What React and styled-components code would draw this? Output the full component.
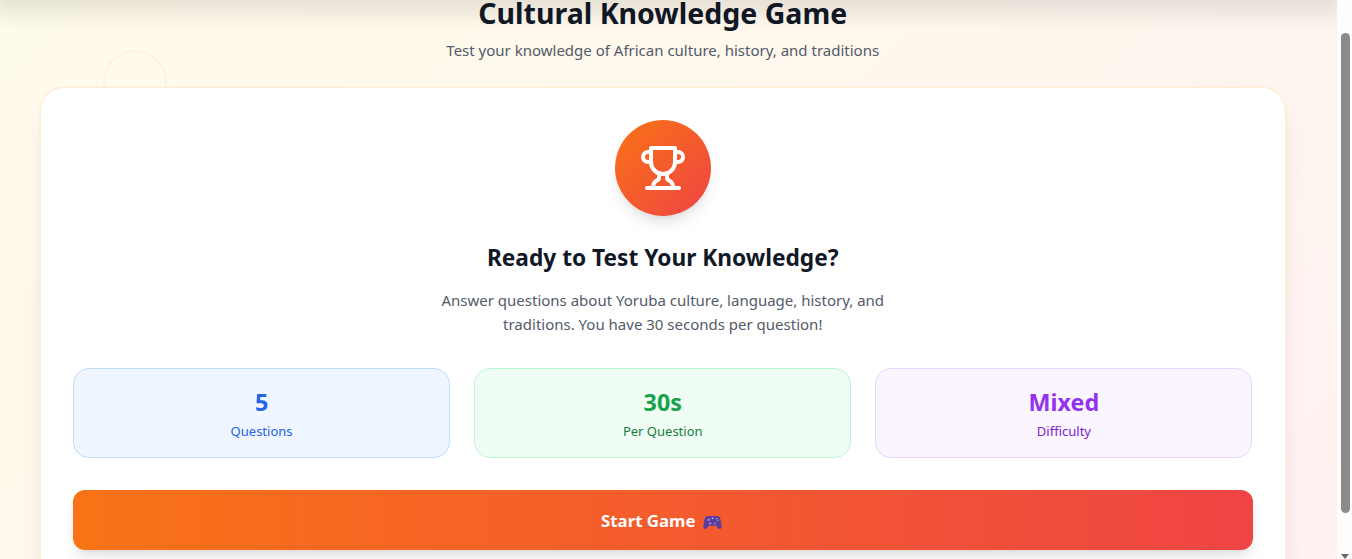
import React from 'react'
import styled, { createGlobalStyle } from 'styled-components'

const GlobalStyle = createGlobalStyle`
    html, body {
        margin: 0;
        height: 100%;
        overflow: hidden;
        font-family: 'Noto Sans', 'Open Sans', sans-serif;
    }
`

const Page = styled.div`
    display: flex;
    height: 559px;
    overflow: hidden;
    background: #fdfdfd;
`

const Main = styled.main`
    position: relative;
    flex: 1;
    overflow: hidden;
    padding: 0 51.5px 0 40px;
    background: linear-gradient(135deg, #fffbeb 0%, #fff7ed 50%, #fef2f2 100%);
    &::before {
        content: '';
        position: absolute;
        top: 0;
        left: 0;
        right: 0;
        height: 0;
        box-shadow: 0 0 24px 10px rgba(0, 0, 0, 0.14);
        z-index: 2;
    }
`

const Ring = styled.div`
    position: absolute;
    top: 50px;
    left: 103px;
    width: 64px;
    height: 64px;
    box-sizing: border-box;
    border: 2px solid rgba(253, 230, 190, 0.3);
    border-radius: 50%;
`

const Header = styled.header`
    position: relative;
    height: 87px;
    text-align: center;
`

const Title = styled.h1`
    margin: 0;
    font-size: 28.5px;
    line-height: 27px;
    font-weight: 700;
    color: #111827;
`

const Subtitle = styled.p`
    margin: 11px 0 0;
    font-size: 15px;
    line-height: 24px;
    color: #525b6a;
`

const Card = styled.section`
    position: relative;
    box-sizing: border-box;
    height: 520px;
    padding: 32px;
    background: #fff;
    border: 1px solid #ffedd5;
    border-radius: 24px;
    box-shadow: 0 0 0 0.5px #ffedd5, 0 20px 25px -5px rgba(0, 0, 0, 0.1), 0 8px 10px -6px rgba(0, 0, 0, 0.1);
    text-align: center;
`

const Badge = styled.div`
    display: flex;
    align-items: center;
    justify-content: center;
    width: 96px;
    height: 96px;
    margin: 0 auto 24px;
    border-radius: 50%;
    background: linear-gradient(135deg, #f97316, #ef4444);
    color: #fff;
    box-shadow: 0 10px 15px -3px rgba(0, 0, 0, 0.1), 0 4px 6px -4px rgba(0, 0, 0, 0.1);
`

const Heading = styled.h2`
    margin: 0 0 14px;
    padding-top: 2px;
    font-size: 22.7px;
    line-height: 32px;
    font-weight: 700;
    color: #111827;
`

const Intro = styled.p`
    width: 448px;
    margin: 0 auto 32px;
    font-size: 15px;
    line-height: 24px;
    color: #525b6a;
`

const Stats = styled.div`
    display: grid;
    grid-template-columns: repeat(3, 1fr);
    gap: 24px;
    margin-bottom: 32px;
`

const Stat = styled.div`
    box-sizing: border-box;
    height: 90px;
    padding: 17px;
    border: 1px solid ${p => p.$border};
    border-radius: 16px;
    background: ${p => p.$bg};
    color: ${p => p.$accent};
`

const StatValue = styled.div`
    font-size: 23.3px;
    line-height: 32px;
    font-weight: 700;
    color: ${p => p.$color};
`

const StatLabel = styled.div`
    margin-top: 3px;
    font-size: 13px;
    line-height: 20px;
`

const StartButton = styled.button`
    display: block;
    width: 100%;
    height: 60px;
    padding: 0 2px 0 0;
    border: none;
    border-radius: 12px;
    background: linear-gradient(90deg, #f97316, #ef4444);
    color: #fff;
    font-family: inherit;
    font-size: 16.8px;
    font-weight: 700;
    box-shadow: 0 10px 15px -3px rgba(0, 0, 0, 0.1), 0 4px 6px -4px rgba(0, 0, 0, 0.1);
`

const Pad = styled.svg`
    vertical-align: -4px;
    margin-left: 8px;
`

const Scrollbar = styled.aside`
    display: flex;
    flex-direction: column;
    align-items: flex-start;
    width: 15px;
    height: 100%;
    padding-left: 4px;
    box-sizing: border-box;
    background: #fdfdfd;
`

const Arrow = styled.div`
    width: 0;
    height: 0;
    margin-top: 41px;
    border-left: 4.5px solid transparent;
    border-right: 4.5px solid transparent;
    border-top: 5px solid #6b6b6b;
`

const Thumb = styled.div`
    width: 9px;
    height: 480px;
    margin-top: 33px;
    border-radius: 5px;
    background: #8b8b8b;
`

const stats = [
    { value: '5', label: 'Questions', bg: '#eff6ff', border: '#bfdbfe', value_color: '#2563eb', accent: '#2563eb' },
    { value: '30s', label: 'Per Question', bg: '#f0fdf4', border: '#bbf7d0', value_color: '#16a34a', accent: '#15803d' },
    { value: 'Mixed', label: 'Difficulty', bg: '#faf5ff', border: '#e9d5ff', value_color: '#9333ea', accent: '#7e22ce' },
]

const TrophyIcon = () => (
    <svg width="48" height="48" viewBox="0 0 24 24" fill="none" stroke="currentColor" strokeWidth="2" strokeLinecap="round" strokeLinejoin="round">
        <path d="M6 9H4.5a2.5 2.5 0 0 1 0-5H6" />
        <path d="M18 9h1.5a2.5 2.5 0 0 0 0-5H18" />
        <path d="M4 22h16" />
        <path d="M10 14.66V17c0 .55-.47.98-.97 1.21C7.85 18.75 7 20.24 7 22" />
        <path d="M14 14.66V17c0 .55.47.98.97 1.21C16.15 18.75 17 20.24 17 22" />
        <path d="M18 2H6v7a6 6 0 0 0 12 0V2Z" />
    </svg>
)

const GamepadIcon = () => (
    <Pad width="19" height="17" viewBox="0 0 20 18">
        <path d="M5 2h10c2 0 3 1.500 3.600 4l1 6c.3 2.500-.6 4-2 4-1.500 0-2.400-1.800-3.600-3.500H6c-1.200 1.700-2.100 3.500-3.600 3.500-1.400 0-2.300-1.500-2-4l1-6C2 3.500 3 2 5 2z" fill="#5b3d9e" />
        <circle cx="6" cy="6" r="1.300" fill="#9a8bd0" />
        <circle cx="10" cy="4.500" r="0.900" fill="#cfc6ee" />
        <circle cx="14.500" cy="5" r="0.800" fill="#4fc3e8" />
        <circle cx="15.500" cy="6.800" r="0.800" fill="#5fd08a" />
        <rect x="6" y="9.500" width="3" height="1" fill="#9a8bd0" />
        <rect x="7" y="8.500" width="1" height="3" fill="#9a8bd0" />
        <circle cx="12.500" cy="10" r="1" fill="#9a8bd0" />
    </Pad>
)

export default function App() {
    return (
        <Page>
            <GlobalStyle />
            <Main>
                <Ring />
                <Header>
                    <Title>Cultural Knowledge Game</Title>
                    <Subtitle>Test your knowledge of African culture, history, and traditions</Subtitle>
                </Header>
                <Card>
                    <Badge><TrophyIcon /></Badge>
                    <Heading>Ready to Test Your Knowledge?</Heading>
                    <Intro>Answer questions about Yoruba culture, language, history, and traditions. You have 30 seconds per question!</Intro>
                    <Stats>
                        {stats.map(s => (
                            <Stat key={s.label} $bg={s.bg} $border={s.border} $accent={s.accent}>
                                <StatValue $color={s.value_color}>{s.value}</StatValue>
                                <StatLabel>{s.label}</StatLabel>
                            </Stat>
                        ))}
                    </Stats>
                    <StartButton>Start Game<GamepadIcon /></StartButton>
                </Card>
            </Main>
            <Scrollbar>
                <Thumb />
                <Arrow />
            </Scrollbar>
        </Page>
    )
}
